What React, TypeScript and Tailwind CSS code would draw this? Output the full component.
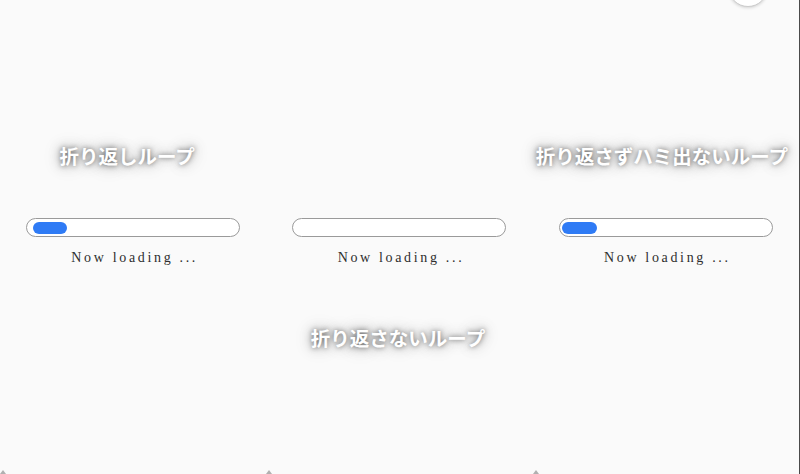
import React from 'react'

type Col = { title: string; fill: number; offset: number; shift: string }

const cols: Col[] = [
  { title: '折り返しループ', fill: 34, offset: 6, shift: 'mr-[12px]' },
  { title: '折り返さないループ', fill: 0, offset: 0, shift: 'mr-[3px]' },
  { title: '折り返さずハミ出ないループ', fill: 35, offset: 2, shift: 'mr-[8px]' },
]

const titleCls =
  "whitespace-nowrap text-[19.5px] leading-[28px] font-semibold text-white font-['Noto_Sans_CJK_JP','Noto_Sans',sans-serif] [text-shadow:0_0_5px_rgba(0,0,0,0.5),0_0_12px_rgba(0,0,0,0.35),0_0_20px_rgba(0,0,0,0.2)]"

function Title({ text, shift }: { text: string; shift: string }) {
  return <div className={`${titleCls} ${shift}`}>{text}</div>
}

export default function App() {
  return (
    <div className="relative flex h-[474px] w-[800px] overflow-hidden border-r border-[#4a4a4a] bg-[#fafafa]">
      {cols.map((c, i) => (
        <div key={i} className="relative flex flex-1 flex-col items-center pt-[142px]">
          <div className="flex h-[28px] items-center justify-center">
            {i !== 1 && <Title text={c.title} shift={c.shift} />}
          </div>
          <div className="mt-[48px] flex h-[19px] w-[214px] items-center rounded-full border border-[#9a9a9a] bg-white">
            {c.fill > 0 && (
              <div
                className="h-[12px] rounded-full bg-[#2f7bf5]"
                style={{ width: c.fill, marginLeft: c.offset }}
              />
            )}
          </div>
          <div className="mt-[13px] pl-[3px] text-[14px] leading-[16px] tracking-[0.19em] text-[#2e2e2e] font-['Liberation_Serif',serif]">
            Now loading ...
          </div>
          <div className="mt-[58px] flex h-[28px] items-center justify-center">
            {i === 1 && <Title text={c.title} shift={c.shift} />}
          </div>
          <div className="absolute bottom-0 left-0 h-0 w-0 border-x-[3px] border-b-[4px] border-x-transparent border-b-[#b0b0b0]" />
        </div>
      ))}
      <div className="absolute right-[31px] top-[-33px] h-[40px] w-[40px] rounded-full border border-[#ccc] bg-white shadow-[0_1px_3px_rgba(0,0,0,0.15)]" />
    </div>
  )
}
